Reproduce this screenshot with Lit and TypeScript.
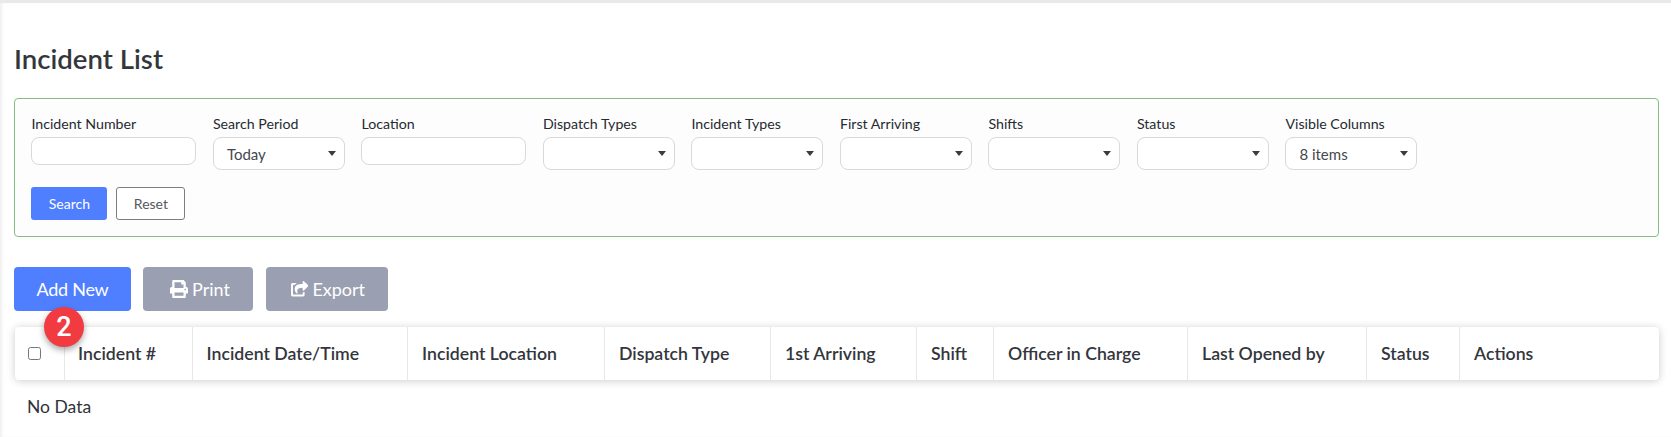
import { LitElement, html, css } from "lit";
import { customElement } from "lit/decorators.js";

const fields: [string, string, string][] = [
  ["Incident Number", "input", ""],
  ["Search Period", "select", "Today"],
  ["Location", "input", ""],
  ["Dispatch Types", "select", ""],
  ["Incident Types", "select", ""],
  ["First Arriving", "select", ""],
  ["Shifts", "select", ""],
  ["Status", "select", ""],
  ["Visible Columns", "select", "8 items"],
];
const cols = ["Incident #", "Incident Date/Time", "Incident Location", "Dispatch Type", "1st Arriving", "Shift", "Officer in Charge", "Last Opened by", "Status", "Actions"];

@customElement("app-root")
export class AppRoot extends LitElement {
  static styles = css`
    :host { display: block; font-family: Lato, "Liberation Sans", sans-serif; color: #2b2f36; background: #fff; height: 437px; overflow: hidden; box-sizing: border-box; border-top: 3px solid #e9e9e9; box-shadow: inset 3px 0 3px -1px #f0f0f0; }
    .page { padding: 0 12px 0 14px; display: flex; flex-direction: column; align-items: stretch; }
    h1 { margin: 42px 0 0; height: 28px; line-height: 28px; font-size: 27.6px; font-weight: 600; color: #33373c; }
    .filters { margin-top: 25px; height: 139px; box-sizing: border-box; border: 1px solid #85bd85; border-radius: 4px; background: #fdfdfd; padding: 16px 16.4px; }
    .row { display: flex; gap: 16.5px; align-items: flex-start; }
    .field { display: flex; flex-direction: column; }
    label { font-size: 14.2px; line-height: 17px; height: 17px; margin-bottom: 5px; color: #262a30; white-space: nowrap; }
    input.text { width: 165px; height: 28px; box-sizing: border-box; border: 1px solid #d9d9d9; border-radius: 8px; background: #fff; padding: 0; margin: 0; }
    .select { width: 132px; height: 33px; box-sizing: border-box; border: 1px solid #d9d9d9; border-radius: 8px; background: #fff; display: flex; align-items: center; justify-content: space-between; padding: 0 8px 0 13px; font-size: 15px; color: #44484e; }
    .caret { width: 0; height: 0; border-left: 4px solid transparent; border-right: 4px solid transparent; border-top: 5px solid #3c3c3c; }
    .actions { display: flex; gap: 9px; margin-top: 17px; }
    button { font-family: inherit; box-sizing: border-box; margin: 0; cursor: pointer; white-space: nowrap; }
    .search { width: 76px; height: 33px; border: 0; border-radius: 3px; background: #4f7eff; color: #fff; font-size: 14px; padding: 0; }
    .reset { width: 69px; height: 33px; border: 1px solid #7d7d7d; border-radius: 3px; background: #fff; color: #55595e; font-size: 14px; padding: 0; }
    .toolbar { display: flex; margin-top: 30px; }
    .big { height: 44px; border: 0; border-radius: 4px; color: #fff; font-size: 18px; padding: 0; display: flex; align-items: center; justify-content: center; gap: 4px; }
    .add { width: 117px; background: #4f7eff; margin-right: 12px; letter-spacing: -0.25px; }
    .print { width: 110px; background: #9a9fb1; margin-right: 13px; padding-left: 4px; }
    .export { width: 122px; background: #9a9fb1; padding-left: 2px; }
    .big svg { fill: #fff; display: block; }
    .print svg { width: 18px; height: 18px; }
    .export svg { width: 17.5px; height: 15.5px; }
    .tablewrap { position: relative; margin: 16px 0 0 1px; }
    .badge { position: absolute; left: 29px; top: -20px; width: 40px; height: 40px; border-radius: 50%; background: #f23b40; color: #fff; font-family: Roboto, sans-serif; font-size: 27px; font-weight: 500; display: flex; align-items: center; justify-content: center; box-shadow: 0 3px 6px rgba(0,0,0,.35); }
    .thead { height: 53px; display: grid; grid-template-columns: 50px 127.5px 215.5px 197px 166px 146px 77px 194px 179px 93px 1fr; background: #fff; border-radius: 4px; box-shadow: 0 1px 8px rgba(0,0,0,.2); }
    .th { display: flex; align-items: center; padding-left: 14px; font-size: 17.7px; font-weight: 600; color: #33363c; border-right: 1px solid #e8e8e8; white-space: nowrap; min-width: 0; box-sizing: border-box; }
    .th:last-child { border-right: 0; }
    .th.check { padding-left: 13px; }
    .th.first { padding-left: 13px; }
    .check input { margin: 0; width: 13px; height: 13px; }
    .nodata { margin: 17px 0 0 13px; font-size: 17.5px; line-height: 20px; color: #2f3338; }
  `;

  render() {
    return html`<div class="page">
      <h1>Incident List</h1>
      <section class="filters">
        <div class="row">
          ${fields.map(([l, k, v]) => html`<div class="field">
            <label>${l}</label>
            ${k === "input" ? html`<input class="text" type="text" />` : html`<div class="select"><span>${v}</span><span class="caret"></span></div>`}
          </div>`)}
        </div>
        <div class="actions">
          <button class="search">Search</button>
          <button class="reset">Reset</button>
        </div>
      </section>
      <div class="toolbar">
        <button class="big add">Add New</button>
        <button class="big print"><svg viewBox="0 0 512 512"><path d="M448 192V77.25c0-8.49-3.37-16.62-9.37-22.63L393.37 9.37c-6-6-14.14-9.37-22.63-9.37H96C78.33 0 64 14.33 64 32v160c-35.35 0-64 28.65-64 64v112c0 8.84 7.16 16 16 16h48v96c0 17.67 14.33 32 32 32h320c17.67 0 32-14.33 32-32v-96h48c8.84 0 16-7.16 16-16V256c0-35.35-28.65-64-64-64zm-64 256H128v-96h256v96zm0-224H128V64h192v48c0 8.84 7.16 16 16 16h48v96zm48 72c-13.25 0-24-10.75-24-24 0-13.26 10.75-24 24-24s24 10.74 24 24c0 13.25-10.75 24-24 24z"/></svg>Print</button>
        <button class="big export"><svg viewBox="0 0 576 512"><path d="M568.482 177.448L424.479 313.433C409.3 327.768 384 317.14 384 295.985v-71.963c-144.575.97-205.566 35.113-164.775 171.353 4.483 14.973-12.846 26.567-25.006 17.33C155.252 383.105 120 326.488 120 269.339c0-143.937 117.599-172.5 264-173.312V24.012c0-21.174 25.317-31.768 40.479-17.448l144.003 136c10.02 9.463 10.028 25.425 0 34.884zM384 379.128V448H64V128h50.916a11.99 11.99 0 0 0 8.648-3.693c14.953-15.568 32.237-27.89 51.014-37.676C185.708 80.83 181.584 64 169.033 64H48C21.49 64 0 85.49 0 112v352c0 26.51 21.49 48 48 48h352c26.51 0 48-21.49 48-48v-88.806c0-8.288-8.197-13.066-15.4-10.1-7.2 3-15.3 5.2-24 6.6-6.3 1-8.6 5.2-8.6 9.434z"/></svg>Export</button>
      </div>
      <div class="tablewrap">
        <span class="badge">2</span>
        <div class="thead">
          <div class="th check"><input type="checkbox" /></div>
          ${cols.map((c, i) => html`<div class="th ${i === 0 ? "first" : ""}">${c}</div>`)}
        </div>
      </div>
      <div class="nodata">No Data</div>
    </div>`;
  }
}
